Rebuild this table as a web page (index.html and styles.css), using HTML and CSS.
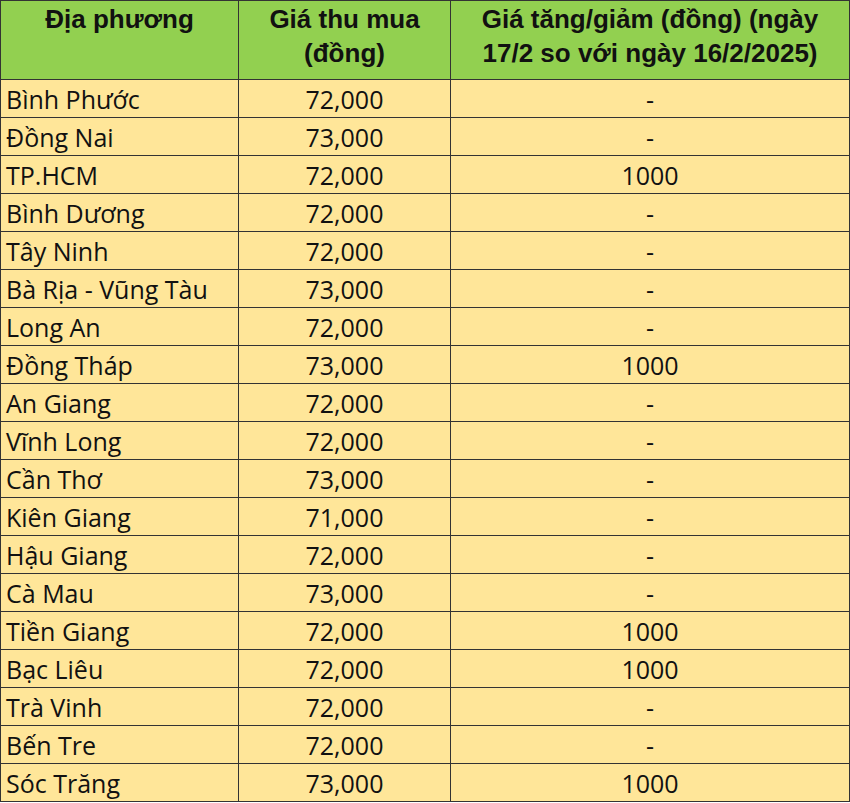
FILE: index.html
```html
<!DOCTYPE html>
<html lang="vi">
<head>
<meta charset="utf-8">
<link rel="stylesheet" href="styles.css">
</head>
<body>
<table class="price-table">
  <colgroup>
    <col class="c1"><col class="c2"><col class="c3">
  </colgroup>
  <thead>
    <tr>
      <th>Địa phương</th>
      <th>Giá thu mua<br>(đồng)</th>
      <th>Giá tăng/giảm (đồng) (ngày<br>17/2 so với ngày 16/2/2025)</th>
    </tr>
  </thead>
  <tbody>
    <tr><td class="name">Bình Phước</td><td>72,000</td><td>-</td></tr>
    <tr><td class="name">Đồng Nai</td><td>73,000</td><td>-</td></tr>
    <tr><td class="name">TP.HCM</td><td>72,000</td><td>1000</td></tr>
    <tr><td class="name">Bình Dương</td><td>72,000</td><td>-</td></tr>
    <tr><td class="name">Tây Ninh</td><td>72,000</td><td>-</td></tr>
    <tr><td class="name">Bà Rịa - Vũng Tàu</td><td>73,000</td><td>-</td></tr>
    <tr><td class="name">Long An</td><td>72,000</td><td>-</td></tr>
    <tr><td class="name">Đồng Tháp</td><td>73,000</td><td>1000</td></tr>
    <tr><td class="name">An Giang</td><td>72,000</td><td>-</td></tr>
    <tr><td class="name">Vĩnh Long</td><td>72,000</td><td>-</td></tr>
    <tr><td class="name">Cần Thơ</td><td>73,000</td><td>-</td></tr>
    <tr><td class="name">Kiên Giang</td><td>71,000</td><td>-</td></tr>
    <tr><td class="name">Hậu Giang</td><td>72,000</td><td>-</td></tr>
    <tr><td class="name">Cà Mau</td><td>73,000</td><td>-</td></tr>
    <tr><td class="name">Tiền Giang</td><td>72,000</td><td>1000</td></tr>
    <tr><td class="name">Bạc Liêu</td><td>72,000</td><td>1000</td></tr>
    <tr><td class="name">Trà Vinh</td><td>72,000</td><td>-</td></tr>
    <tr><td class="name">Bến Tre</td><td>72,000</td><td>-</td></tr>
    <tr><td class="name">Sóc Trăng</td><td>73,000</td><td>1000</td></tr>
  </tbody>
</table>
</body>
</html>
```
FILE: styles.css
```css
html, body {
  margin: 0;
  padding: 0;
  background: #ffffff;
}
.price-table {
  border-collapse: collapse;
  table-layout: fixed;
  width: 849px;
  color: #111111;
}
.c1 { width: 238px; }
.c2 { width: 212px; }
.c3 { width: 399px; }
.price-table th {
  background: #92d050;
  font-family: "Liberation Sans", Arial, sans-serif;
  font-weight: bold;
  font-size: 26px;
  line-height: 34px;
  height: 79px;
  padding: 1px 0 0 0;
  vertical-align: top;
  text-align: center;
  border: 1px solid #333333;
  box-sizing: border-box;
}
.price-table td {
  background: #ffe699;
  font-family: "Open Sans", "Noto Sans", sans-serif;
  font-size: 25px;
  height: 38px;
  padding: 0;
  text-align: center;
  vertical-align: middle;
  border: 1px solid #333333;
  box-sizing: border-box;
  line-height: 36px;
}
.price-table td.name {
  text-align: left;
  padding-left: 5px;
}
```
